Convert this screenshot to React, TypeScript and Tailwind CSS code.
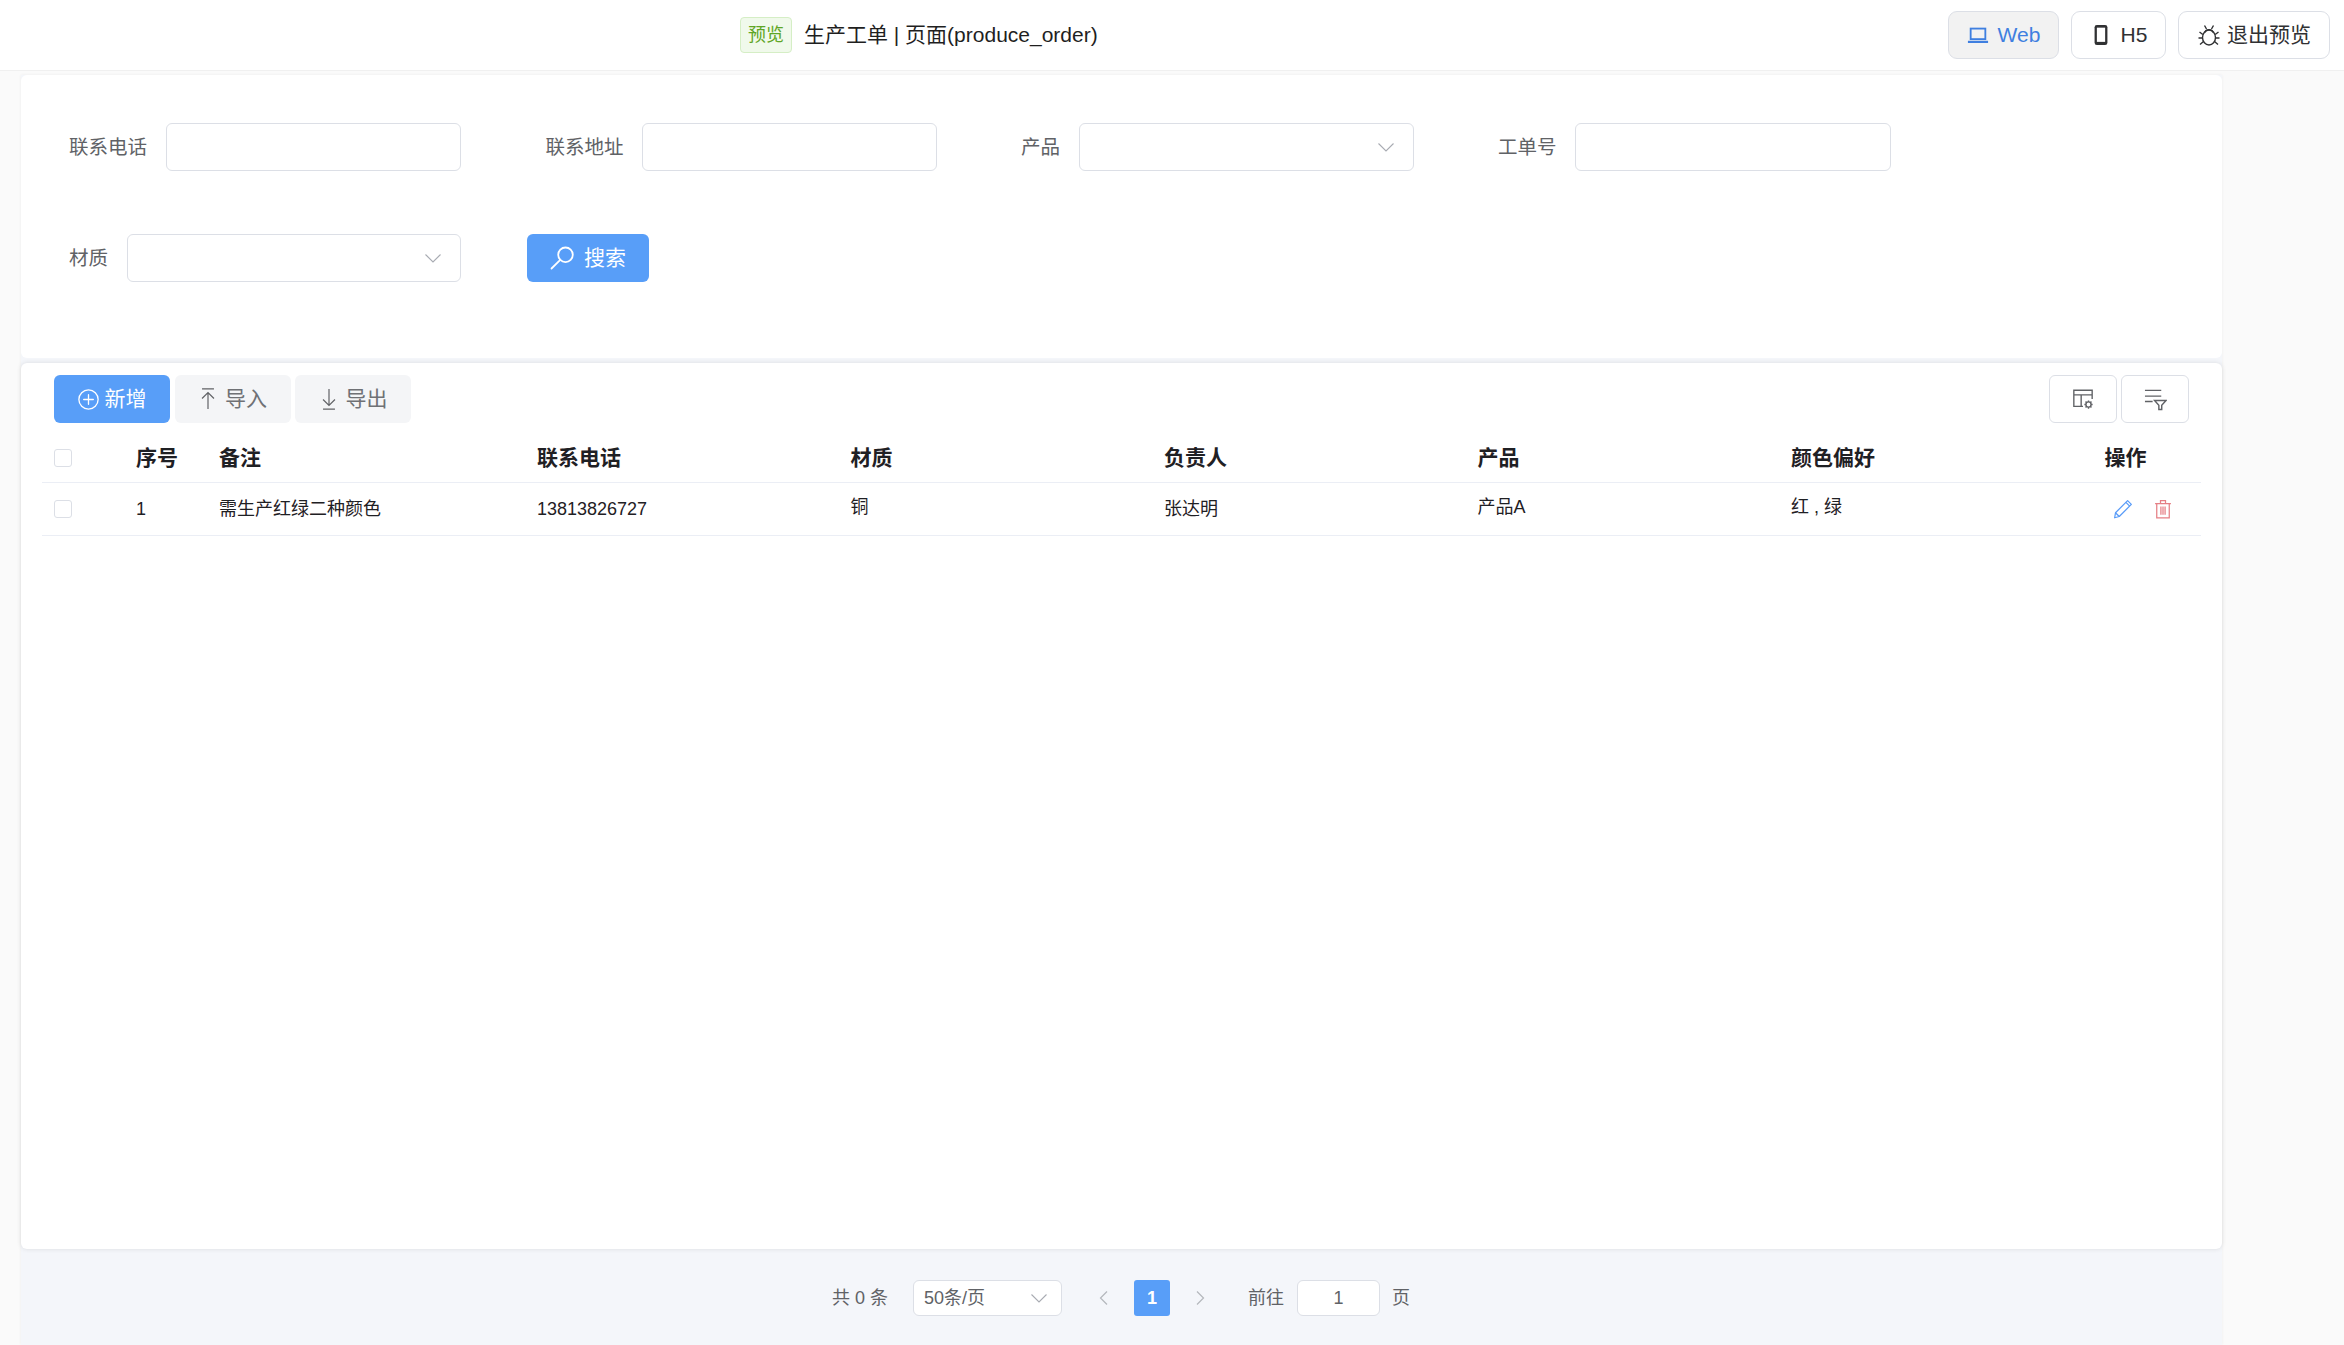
const FONT = "[font-family:'Liberation_Sans','Noto_Sans_CJK_SC',sans-serif]";

function Chevron({ className }: { className: string }) {
  return (
    <svg viewBox="0 0 16 9" className={className} fill="none" stroke="#a8abb2" strokeWidth="1.100">
      <path d="M0.500 0.500L8 8l7.500-7.500" />
    </svg>
  );
}

function PageArrow({ flip }: { flip?: boolean }) {
  return (
    <svg viewBox="0 0 9 14" className={`w-[9px] h-[14px] ${flip ? "rotate-180" : ""}`} fill="none" stroke="#b4b7bc" strokeWidth="1.200">
      <path d="M8 0.500L1.500 7 8 13.500" />
    </svg>
  );
}

function TextField({ width }: { width: string }) {
  return <div className={`${width} h-12 rounded-[6px] bg-white border-[1.5px] border-[#dcdfe6] shrink-0`} />;
}

function SelectField({ width }: { width: string }) {
  return (
    <div className={`${width} h-12 rounded-[6px] bg-white border-[1.5px] border-[#dcdfe6] shrink-0 flex items-center justify-end pr-[19px]`}>
      <Chevron className="w-[16px] h-[9px]" />
    </div>
  );
}

function Label({ children }: { children: string }) {
  return <span className="text-[19.5px] leading-[48px] text-[#606266] whitespace-nowrap">{children}</span>;
}

function LaptopIcon() {
  return (
    <svg viewBox="0 0 24 24" className="w-[22px] h-[22px]" fill="none" stroke="currentColor">
      <rect x="4" y="5" width="16" height="11.500" strokeWidth="2" />
      <path d="M1 19.500h22" strokeWidth="2.400" />
    </svg>
  );
}

function PhoneIcon() {
  return (
    <svg viewBox="0 0 24 24" className="w-[22px] h-[22px]" fill="none">
      <rect x="5" y="1" width="14" height="22" rx="2.500" fill="#303133" />
      <rect x="7.500" y="4" width="9" height="15.500" fill="#fff" />
    </svg>
  );
}

function BugIcon() {
  return (
    <svg viewBox="0 0 24 24" className="w-[24px] h-[24px]" fill="none" stroke="#303133" strokeWidth="1.400">
      <ellipse cx="12" cy="14.500" rx="6.500" ry="7.500" />
      <path d="M7.800 9.500a4.500 4.500 0 0 1 8.400 0" />
      <path d="M7.500 2.500l2 3.500M16.500 2.500l-2 3.500M5.800 11.500L2.500 9M18.200 11.500L21.500 9M5.500 15H1.500M18.500 15h4M6.500 18.500L3 21.500M17.500 18.500l3.500 3" />
    </svg>
  );
}

function SearchIcon() {
  return (
    <svg viewBox="0 0 24 24" className="w-[24px] h-[24px]" fill="none" stroke="#fff" strokeWidth="1.800" strokeLinecap="round">
      <circle cx="15.500" cy="8.800" r="7.300" />
      <path d="M10 14.200L1.500 22.500" />
    </svg>
  );
}

function CirclePlusIcon() {
  return (
    <svg viewBox="0 0 24 24" className="w-[21px] h-[21px]" fill="none" stroke="#fff" strokeWidth="1.500" strokeLinecap="round">
      <circle cx="12" cy="12" r="11" />
      <path d="M12 6.500v11M6.500 12h11" />
    </svg>
  );
}

function UploadIcon() {
  return (
    <svg viewBox="0 0 24 24" className="w-[22px] h-[22px]" fill="none" stroke="#606266" strokeWidth="1.300">
      <path d="M5.500 1h13M12 23V5.500M5.500 11.500L12 5l6.500 6.500" />
    </svg>
  );
}

function DownloadIcon() {
  return (
    <svg viewBox="0 0 24 24" className="w-[22px] h-[22px]" fill="none" stroke="#606266" strokeWidth="1.300">
      <path d="M5.500 23h13M12 1v17.500M5.500 12.500L12 19l6.500-6.500" />
    </svg>
  );
}

function TableConfigIcon() {
  return (
    <svg viewBox="0 0 24 24" className="w-[22px] h-[22px]" fill="none" stroke="#606266" strokeWidth="1.500">
      <path d="M12 20H2V2.500h20V12M2 7.500h20M10 7.500V20" />
      <circle cx="18" cy="18" r="2.800" />
      <path d="M18 13.500v1.700M18 20.800v1.700M13.500 18h1.700M20.800 18h1.700M14.800 14.800l1.200 1.200M20 20l1.200 1.200M21.200 14.800L20 16M16 20l-1.200 1.200" />
    </svg>
  );
}

function FilterListIcon() {
  return (
    <svg viewBox="0 0 24 24" className="w-[23px] h-[23px]" fill="none" stroke="#606266" strokeWidth="1.500">
      <path d="M1 2.500h17M1 8.500h17M1 14h8" />
      <path d="M11 13h12l-4.500 5v4.500h-3V18z" />
    </svg>
  );
}

function PencilIcon() {
  return (
    <svg viewBox="0 0 24 24" className="w-[20px] h-[20px]" fill="none" stroke="#5a9cf8" strokeWidth="1.500" strokeLinejoin="round">
      <path d="M3 16.500L17.500 2l4.500 4.500L7.500 21 2 22.500z" />
      <path d="M3 16.500l4.500 4.500M15.500 4l4.500 4.500" />
    </svg>
  );
}

function TrashIcon() {
  return (
    <svg viewBox="0 0 24 24" className="w-[20px] h-[20px]" fill="none" stroke="#e57f85" strokeWidth="1.500">
      <path d="M2.500 5.500h19M9 5.500V2h6v3.500M4.500 5.500V22.500h15V5.500M9.500 9v10M12 9v10M14.500 9v10" />
    </svg>
  );
}

function Checkbox() {
  return <div className="w-[18px] h-[18px] rounded-[3px] border-[1.5px] border-[#dcdfe6] bg-white" />;
}

export default function App() {
  return (
    <div className={`${FONT} h-[1345px] overflow-hidden bg-[#fafafa] flex flex-col`}>
      <header className="h-[71px] shrink-0 bg-white border-b-[1.5px] border-[#f0f0f0] flex items-center pl-[740px] pr-[14px]">
        <span className="w-[52px] h-9 rounded-[4px] bg-[#f0f9eb] border-[1.5px] border-[#d5eec5] text-[#5fa625] text-[18px] flex items-center justify-center">预览</span>
        <span className="ml-3 text-[21px] text-[#1f1f1f]">生产工单 | 页面(produce_order)</span>
        <div className="ml-auto flex gap-3">
          <div className="w-[111px] h-12 rounded-[9px] bg-[#f2f2f2] border-[1.5px] border-[#dcdfe6] text-[#3f7fe0] text-[21px] flex items-center justify-center gap-[9px]">
            <LaptopIcon />
            Web
          </div>
          <div className="w-[95px] h-12 rounded-[9px] bg-white border-[1.5px] border-[#dcdfe6] text-[#303133] text-[21px] flex items-center justify-center gap-[9px]">
            <PhoneIcon />
            H5
          </div>
          <div className="w-[152px] h-12 rounded-[9px] bg-white border-[1.5px] border-[#dcdfe6] text-[#303133] text-[21px] flex items-center justify-center gap-[6px]">
            <BugIcon />
            退出预览
          </div>
        </div>
      </header>

      <main className="w-[2201px] ml-[21px] mt-1 flex-1 flex flex-col bg-[#f4f6fa] shadow-[0_0_3px_rgba(0,0,0,0.06)]">
        <section className="h-[283px] shrink-0 bg-white rounded-[6px] pt-12 pl-12">
          <div className="flex items-center">
            <Label>联系电话</Label>
            <div className="w-[18.5px]" />
            <TextField width="w-[295px]" />
            <div className="w-[85px]" />
            <Label>联系地址</Label>
            <div className="w-[18px]" />
            <TextField width="w-[295px]" />
            <div className="w-[84.5px]" />
            <Label>产品</Label>
            <div className="w-[18.5px]" />
            <SelectField width="w-[335px]" />
            <div className="w-[84.5px]" />
            <Label>工单号</Label>
            <div className="w-[18.5px]" />
            <TextField width="w-[315.5px]" />
          </div>
          <div className="flex items-center mt-[63px]">
            <Label>材质</Label>
            <div className="w-[18.5px]" />
            <SelectField width="w-[334px]" />
            <button className="ml-[66.5px] w-[122px] h-12 rounded-[6px] bg-[#589ef8] text-white text-[21px] flex items-center justify-center gap-[10px]">
              <SearchIcon />
              搜索
            </button>
          </div>
        </section>

        <section className="h-[886px] shrink-0 mt-[5px] bg-white rounded-[6px] shadow-[0_0_5px_rgba(0,0,0,0.11)] pt-3 px-[21px]">
          <div className="flex items-center justify-between pl-[12px] pr-[12px]">
            <div className="flex gap-[4.5px]">
              <button className="w-[116px] h-12 rounded-[6px] bg-[#589ef8] text-white text-[21px] flex items-center justify-center gap-[6px]">
                <CirclePlusIcon />
                新增
              </button>
              <button className="w-[116px] h-12 rounded-[6px] bg-[#f4f5f7] text-[#6f7175] text-[21px] flex items-center justify-center gap-[6px] pr-[1px]">
                <UploadIcon />
                导入
              </button>
              <button className="w-[116px] h-12 rounded-[6px] bg-[#f4f5f7] text-[#6f7175] text-[21px] flex items-center justify-center gap-[6px] pr-[1px]">
                <DownloadIcon />
                导出
              </button>
            </div>
            <div className="flex gap-1">
              <button className="w-[68px] h-12 rounded-[6px] bg-white border-[1.5px] border-[#dcdfe6] flex items-center justify-center">
                <TableConfigIcon />
              </button>
              <button className="w-[68px] h-12 rounded-[6px] bg-white border-[1.5px] border-[#dcdfe6] flex items-center justify-center">
                <FilterListIcon />
              </button>
            </div>
          </div>

          <div className="mt-[11px] h-[49px] border-b-[1.5px] border-[#ebeef5] flex items-center text-[21px] font-bold text-[#1f2024]">
            <div className="w-[94px] pl-[12px] flex items-center"><Checkbox /></div>
            <div className="w-[83px]">序号</div>
            <div className="w-[318px]">备注</div>
            <div className="w-[313.5px]">联系电话</div>
            <div className="w-[313.5px]">材质</div>
            <div className="w-[313.5px]">负责人</div>
            <div className="w-[313.5px]">产品</div>
            <div className="w-[313.5px]">颜色偏好</div>
            <div>操作</div>
          </div>

          <div className="h-[53px] pt-[1px] border-b-[1.5px] border-[#ebeef5] flex items-center text-[18px] text-[#1f2024]">
            <div className="w-[94px] pl-[12px] flex items-center -mt-[1px]"><Checkbox /></div>
            <div className="w-[83px]">1</div>
            <div className="w-[318px]">需生产红绿二种颜色</div>
            <div className="w-[313.5px]">13813826727</div>
            <div className="w-[313.5px] -mt-[5px]">铜</div>
            <div className="w-[313.5px]">张达明</div>
            <div className="w-[313.5px] -mt-[5px]">产品A</div>
            <div className="w-[322px] -mt-[5px]">红 , 绿</div>
            <div className="flex items-center gap-[20px] -mt-[1px]">
              <PencilIcon />
              <TrashIcon />
            </div>
          </div>
        </section>

        <footer className="flex-1 flex items-start pt-[31px] pl-[811px] text-[18px] text-[#606266]">
          <span className="leading-9">共 0 条</span>
          <div className="ml-[25px] w-[149px] h-9 rounded-[6px] bg-white border-[1.5px] border-[#dcdfe6] flex items-center justify-between pl-[10px] pr-[14px]">
            <span>50条/页</span>
            <Chevron className="w-[16px] h-[9px]" />
          </div>
          <div className="ml-[37px] h-9 flex items-center"><PageArrow /></div>
          <div className="ml-[26px] w-9 h-9 rounded-[3px] bg-[#589ef8] text-white font-bold flex items-center justify-center">1</div>
          <div className="ml-[26px] h-9 flex items-center"><PageArrow flip /></div>
          <span className="ml-[43px] leading-9">前往</span>
          <div className="ml-[13px] w-[83px] h-9 rounded-[6px] bg-white border-[1.5px] border-[#dcdfe6] flex items-center justify-center">1</div>
          <span className="ml-[12px] leading-9">页</span>
        </footer>
      </main>
    </div>
  );
}
